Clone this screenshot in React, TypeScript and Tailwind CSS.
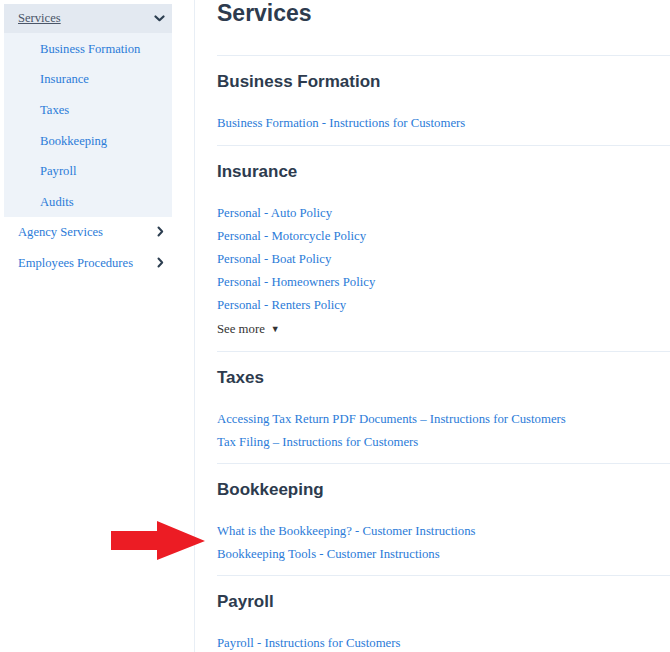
import React from "react";

const serif = { fontFamily: '"Liberation Serif", serif' };

function ChevronDown() {
  return (
    <svg width="11" height="7" viewBox="0 0 11 7" fill="none">
      <path d="M1.5 1.5 L5.5 5.2 L9.5 1.5" stroke="#2c3e50" strokeWidth="2.2" strokeLinecap="round" strokeLinejoin="round" />
    </svg>
  );
}

function ChevronRight() {
  return (
    <svg width="7" height="11" viewBox="0 0 7 11" fill="none">
      <path d="M1.5 1.5 L5.2 5.5 L1.5 9.5" stroke="#2c3e50" strokeWidth="2" strokeLinecap="round" strokeLinejoin="round" />
    </svg>
  );
}

const sections: { title: string; links: string[]; more?: boolean; pb: string }[] = [
  { title: "Business Formation", links: ["Business Formation - Instructions for Customers"], pb: "pb-[10px]" },
  {
    title: "Insurance",
    links: [
      "Personal - Auto Policy",
      "Personal - Motorcycle Policy",
      "Personal - Boat Policy",
      "Personal - Homeowners Policy",
      "Personal - Renters Policy",
    ],
    more: true,
    pb: "pb-[9px]",
  },
  {
    title: "Taxes",
    links: [
      "Accessing Tax Return PDF Documents \u2013 Instructions for Customers",
      "Tax Filing \u2013 Instructions for Customers",
    ],
    pb: "pb-[9px]",
  },
  {
    title: "Bookkeeping",
    links: [
      "What is the Bookkeeping? - Customer Instructions",
      "Bookkeeping Tools - Customer Instructions",
    ],
    pb: "pb-[9px]",
  },
  { title: "Payroll", links: ["Payroll - Instructions for Customers"], pb: "pb-[10px]" },
];

export default function App() {
  const sub = ["Business Formation", "Insurance", "Taxes", "Bookkeeping", "Payroll", "Audits"];
  return (
    <div className="relative w-[670px] h-[652px] overflow-hidden bg-white flex">
      <aside className="w-[195px] shrink-0 border-r border-[#e8eef5] pt-[4px] pl-[4px] pr-[22px]" style={serif}>
        <div className="bg-[#eef3f9] w-[168px]">
          <div className="h-[29px] bg-[#e3e9f1] flex items-center justify-between pl-[14px] pr-[7px]">
            <span className="text-[12.6px] text-[#4a5568] underline">Services</span>
            <ChevronDown />
          </div>
          <div>
            {sub.map((s) => (
              <div key={s} className="h-[30.6px] flex items-center pt-[2px] pl-[36px] text-[12.6px] text-[#2b7bd8]">
                {s}
              </div>
            ))}
          </div>
        </div>
        <div className="w-[168px]">
          {["Agency Services", "Employees Procedures"].map((s) => (
            <div key={s} className="h-[30.6px] flex items-center justify-between pl-[14px] pr-[8px] text-[12.6px] text-[#2b7bd8]">
              <span className="pt-[2px]">{s}</span>
              <ChevronRight />
            </div>
          ))}
        </div>
      </aside>
      <main className="flex-1 pl-[22px] -mt-[4px]" style={{ fontFamily: '"Liberation Sans", Arial, sans-serif' }}>
        <h1 className="text-[23px] font-bold text-[#2d3b4e] leading-[34px] h-[59px]">Services</h1>
        {sections.map((sec) => (
          <section key={sec.title} className={"border-t border-[#e6edf5] pt-[16px] " + sec.pb}>
            <h2 className="text-[17px] font-bold text-[#2d3b4e] leading-[20px] mb-[20px]">{sec.title}</h2>
            <div style={serif}>
              {sec.links.map((l) => (
                <div key={l} className="text-[12.75px] leading-[23px] text-[#2b7bd8]">
                  {l}
                </div>
              ))}
              {sec.more && (
                <div className="text-[12.75px] leading-[25px] text-[#333] flex items-center gap-[6px]">
                  See more <span className="text-[9px]">▼</span>
                </div>
              )}
            </div>
          </section>
        ))}
      </main>
      <svg className="absolute left-[111px] top-[521px]" width="96" height="40" viewBox="0 0 96 40">
        <polygon points="0,10 46,10 46,0 94,20 46,39 46,29 0,29" fill="#ec1c24" />
      </svg>
    </div>
  );
}
